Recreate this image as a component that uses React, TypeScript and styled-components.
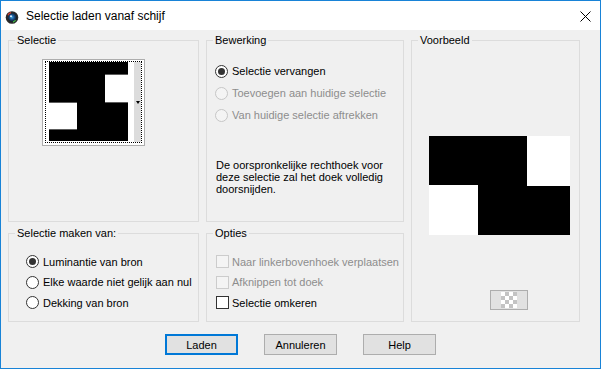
import React from "react";
import styled, { createGlobalStyle } from "styled-components";

const GlobalStyle = createGlobalStyle`
  html, body {
    margin: 0;
    padding: 0;
    background: #ffffff;
  }
  body {
    font-family: "Liberation Sans", Arial, sans-serif;
    font-size: 11px;
    color: #000000;
  }
`;

type DisabledProps = { $disabled?: boolean };

export default function App() {
  return (
    <>
      <GlobalStyle />
      <WindowStyled>
        <TitleBar>
          <AppIcon />
          <TitleText>Selectie laden vanaf schijf</TitleText>
          <CloseButton aria-label="close">
            <svg width="11" height="11" viewBox="0 0 11 11">
              <path d="M0.5 0.5 L10.5 10.5 M10.5 0.5 L0.5 10.5" stroke="#000" strokeWidth="1" />
            </svg>
          </CloseButton>
        </TitleBar>

        <ClientArea>
          <PanelGrid>
            <GroupBox $area="sel">
              <Legend>Selectie</Legend>
              <ThumbBox>
                <ThumbFocus>
                  <SelectionThumb />
                  <ThumbGap />
                  <ThumbStrip>
                    <DropArrow />
                  </ThumbStrip>
                </ThumbFocus>
              </ThumbBox>
            </GroupBox>

            <GroupBox $area="edit">
              <Legend>Bewerking</Legend>
              <OptionList $top={13} $left={8} $row={22}>
                <Radio checked label="Selectie vervangen" />
                <Radio disabled label="Toevoegen aan huidige selectie" />
                <Radio disabled label="Van huidige selectie aftrekken" />
              </OptionList>
              <Description>
                De oorspronkelijke rechthoek voor
                <br />
                deze selectie zal het doek volledig
                <br />
                doorsnijden.
              </Description>
            </GroupBox>

            <GroupBox $area="preview">
              <Legend>Voorbeeld</Legend>
              <PreviewImage />
              <CheckerButton aria-label="transparantie">
                <Checker />
              </CheckerButton>
            </GroupBox>

            <GroupBox $area="source">
              <Legend>Selectie maken van:</Legend>
              <OptionList $top={11.5} $left={17} $row={20.5}>
                <Radio checked label="Luminantie van bron" />
                <Radio label="Elke waarde niet gelijk aan nul" />
                <Radio label="Dekking van bron" />
              </OptionList>
            </GroupBox>

            <GroupBox $area="options">
              <Legend>Opties</Legend>
              <OptionList $top={11.5} $left={9} $row={20.5}>
                <Check disabled label="Naar linkerbovenhoek verplaatsen" />
                <Check disabled label="Afknippen tot doek" />
                <Check label="Selectie omkeren" />
              </OptionList>
            </GroupBox>
          </PanelGrid>

          <ButtonRow>
            <DialogButton $default>Laden</DialogButton>
            <DialogButton>Annuleren</DialogButton>
            <DialogButton>Help</DialogButton>
          </ButtonRow>
        </ClientArea>
      </WindowStyled>
    </>
  );
}

function Radio(props: { label: string; checked?: boolean; disabled?: boolean }) {
  return (
    <OptionRow $disabled={props.disabled}>
      <RadioCircle $disabled={props.disabled}>{props.checked && <RadioDot />}</RadioCircle>
      <span>{props.label}</span>
    </OptionRow>
  );
}

function Check(props: { label: string; disabled?: boolean }) {
  return (
    <OptionRow $disabled={props.disabled} $gap={3}>
      <CheckSquare $disabled={props.disabled} />
      <span>{props.label}</span>
    </OptionRow>
  );
}

function AppIcon() {
  return (
    <IconWrap>
      <svg width="14" height="14" viewBox="0 0 14 14">
        <defs>
          <radialGradient id="lens" cx="0.45" cy="0.45" r="0.6">
            <stop offset="0" stopColor="#3fa7e0" />
            <stop offset="0.45" stopColor="#1b4f8a" />
            <stop offset="1" stopColor="#0d0d0d" />
          </radialGradient>
        </defs>
        <circle cx="7" cy="7.5" r="6.3" fill="#2a2a2a" />
        <circle cx="7.4" cy="7.6" r="4.3" fill="url(#lens)" />
        <path d="M3 5.2 A4.6 4.6 0 0 1 6 2.6" stroke="#d83a2e" strokeWidth="1.3" fill="none" />
        <path d="M10.6 10.2 A4.6 4.6 0 0 1 8 12" stroke="#3cb043" strokeWidth="1.3" fill="none" />
        <circle cx="6" cy="6.2" r="1" fill="#e8f4ff" />
      </svg>
    </IconWrap>
  );
}

function SelectionThumb() {
  return (
    <svg width="79" height="79" viewBox="0 0 79 79" style={{ display: "block" }}>
      <rect x="0" y="0" width="79" height="79" fill="#000" />
      <rect x="56" y="12" width="23" height="28" fill="#fff" />
      <rect x="0" y="41" width="28" height="26" fill="#fff" />
      <rect x="56" y="12" width="23" height="1" fill="#5c5c5c" />
      <rect x="56" y="40" width="23" height="1" fill="#5c5c5c" />
      <rect x="0" y="40" width="28" height="1" fill="#5c5c5c" />
      <rect x="0" y="67" width="28" height="1" fill="#5c5c5c" />
    </svg>
  );
}

function PreviewImage() {
  return (
    <PreviewWrap>
      <svg width="141" height="99" viewBox="0 0 141 99" style={{ display: "block" }}>
        <rect x="0" y="0" width="141" height="99" fill="#000" />
        <rect x="98" y="0" width="43" height="50" fill="#fff" />
        <rect x="0" y="49" width="49" height="50" fill="#fff" />
      </svg>
    </PreviewWrap>
  );
}

function Checker() {
  return (
    <svg width="16" height="16" viewBox="0 0 16 16" style={{ display: "block" }}>
      {[0, 1, 2, 3].map((r) =>
        [0, 1, 2, 3].map((c) => (
          <rect
            key={`${r}-${c}`}
            x={c * 4}
            y={r * 4}
            width="4"
            height="4"
            fill={(r + c) % 2 === 0 ? "#ffffff" : "#c3c3c3"}
          />
        ))
      )}
    </svg>
  );
}

const WindowStyled = styled.div`
  box-sizing: border-box;
  width: 601px;
  height: 369px;
  border: 1px solid #1883d7;
  background: #f0f0f0;
  display: flex;
  flex-direction: column;
  overflow: hidden;
`;

const TitleBar = styled.div`
  height: 29px;
  background: #ffffff;
  display: flex;
  align-items: center;
  padding-left: 4px;
  padding-right: 9px;
`;

const IconWrap = styled.div`
  width: 14px;
  height: 14px;
  margin-top: 2px;
  svg {
    display: block;
  }
`;

const TitleText = styled.div`
  margin-left: 7px;
  font-size: 12px;
  color: #000;
  line-height: 16px;
`;

const CloseButton = styled.div`
  margin-left: auto;
  width: 11px;
  height: 11px;
  margin-top: 1px;
  svg {
    display: block;
  }
`;

const ClientArea = styled.div`
  flex: 1;
  padding: 4px 0 0 7px;
  display: flex;
  flex-direction: column;
`;

const PanelGrid = styled.div`
  display: grid;
  grid-template-columns: 191px 198px 169px;
  grid-template-rows: 188px 95px;
  column-gap: 7px;
  row-gap: 5px;
  grid-template-areas:
    "sel edit preview"
    "source options preview";
`;

const GroupBox = styled.fieldset<{ $area: string }>`
  grid-area: ${(p) => p.$area};
  margin: 0;
  padding: 0;
  min-width: 0;
  box-sizing: border-box;
  border: 1px solid #dcdcdc;
  display: flex;
  flex-direction: column;
  align-items: flex-start;
`;

const Legend = styled.legend`
  margin-left: 6px;
  padding: 0 2px;
  font-size: 11px;
  line-height: 13px;
  color: #000;
`;

const ThumbBox = styled.div`
  box-sizing: border-box;
  margin: 12px 0 0 33px;
  width: 103px;
  height: 87px;
  border: 1px solid #adadad;
  background: #ffffff;
  padding: 1px 2px 2px 2px;
`;

const ThumbFocus = styled.div`
  box-sizing: border-box;
  width: 100%;
  height: 100%;
  border: 1px dotted #000;
  padding: 0 0 0 3px;
  display: flex;
`;

const ThumbGap = styled.div`
  width: 6px;
`;

const ThumbStrip = styled.div`
  width: 7px;
  background: #dcdcdc;
  display: flex;
  align-items: center;
  justify-content: center;
`;

const DropArrow = styled.div`
  width: 0;
  height: 0;
  border-left: 2.5px solid transparent;
  border-right: 2.5px solid transparent;
  border-top: 3px solid #000;
  margin-top: 1px;
`;

const OptionList = styled.div<{ $top: number; $left: number; $row: number }>`
  margin-top: ${(p) => p.$top}px;
  padding-left: ${(p) => p.$left}px;
  display: flex;
  flex-direction: column;
  > div {
    height: ${(p) => p.$row}px;
  }
`;

const OptionRow = styled.div<DisabledProps & { $gap?: number }>`
  display: flex;
  align-items: center;
  gap: ${(p) => p.$gap ?? 4}px;
  font-size: 11px;
  color: ${(p) => (p.$disabled ? "#8d8d8d" : "#000")};
  white-space: nowrap;
`;

const RadioCircle = styled.div<DisabledProps>`
  box-sizing: border-box;
  width: 13px;
  height: 13px;
  border-radius: 50%;
  border: 1px solid ${(p) => (p.$disabled ? "#c6c6c6" : "#333333")};
  background: ${(p) => (p.$disabled ? "#f4f4f4" : "#ffffff")};
  display: flex;
  align-items: center;
  justify-content: center;
  flex: none;
`;

const RadioDot = styled.div`
  width: 7px;
  height: 7px;
  border-radius: 50%;
  background: #333333;
`;

const CheckSquare = styled.div<DisabledProps>`
  box-sizing: border-box;
  width: 13px;
  height: 13px;
  border: 1px solid ${(p) => (p.$disabled ? "#cccccc" : "#333333")};
  background: ${(p) => (p.$disabled ? "#f4f4f4" : "#ffffff")};
  flex: none;
`;

const Description = styled.div`
  margin: 33px 0 0 9px;
  font-size: 11px;
  line-height: 12px;
  color: #000;
`;

const PreviewWrap = styled.div`
  margin: 89px 0 0 17px;
`;

const CheckerButton = styled.div`
  box-sizing: border-box;
  margin: 55px 0 0 78px;
  width: 38px;
  height: 20px;
  border: 1px solid #adadad;
  background: #e1e1e1;
  display: flex;
  align-items: center;
  justify-content: center;
`;

const ButtonRow = styled.div`
  margin-top: 12px;
  margin-left: -7px;
  display: flex;
  justify-content: center;
  gap: 26px;
`;

const DialogButton = styled.button<{ $default?: boolean }>`
  box-sizing: border-box;
  width: 73px;
  height: 21px;
  margin: 0;
  padding: 0;
  font-family: "Liberation Sans", Arial, sans-serif;
  font-size: 11px;
  color: #000;
  background: #e1e1e1;
  border: ${(p) => (p.$default ? "2px solid #0078d7" : "1px solid #adadad")};
  border-radius: 0;
`;
